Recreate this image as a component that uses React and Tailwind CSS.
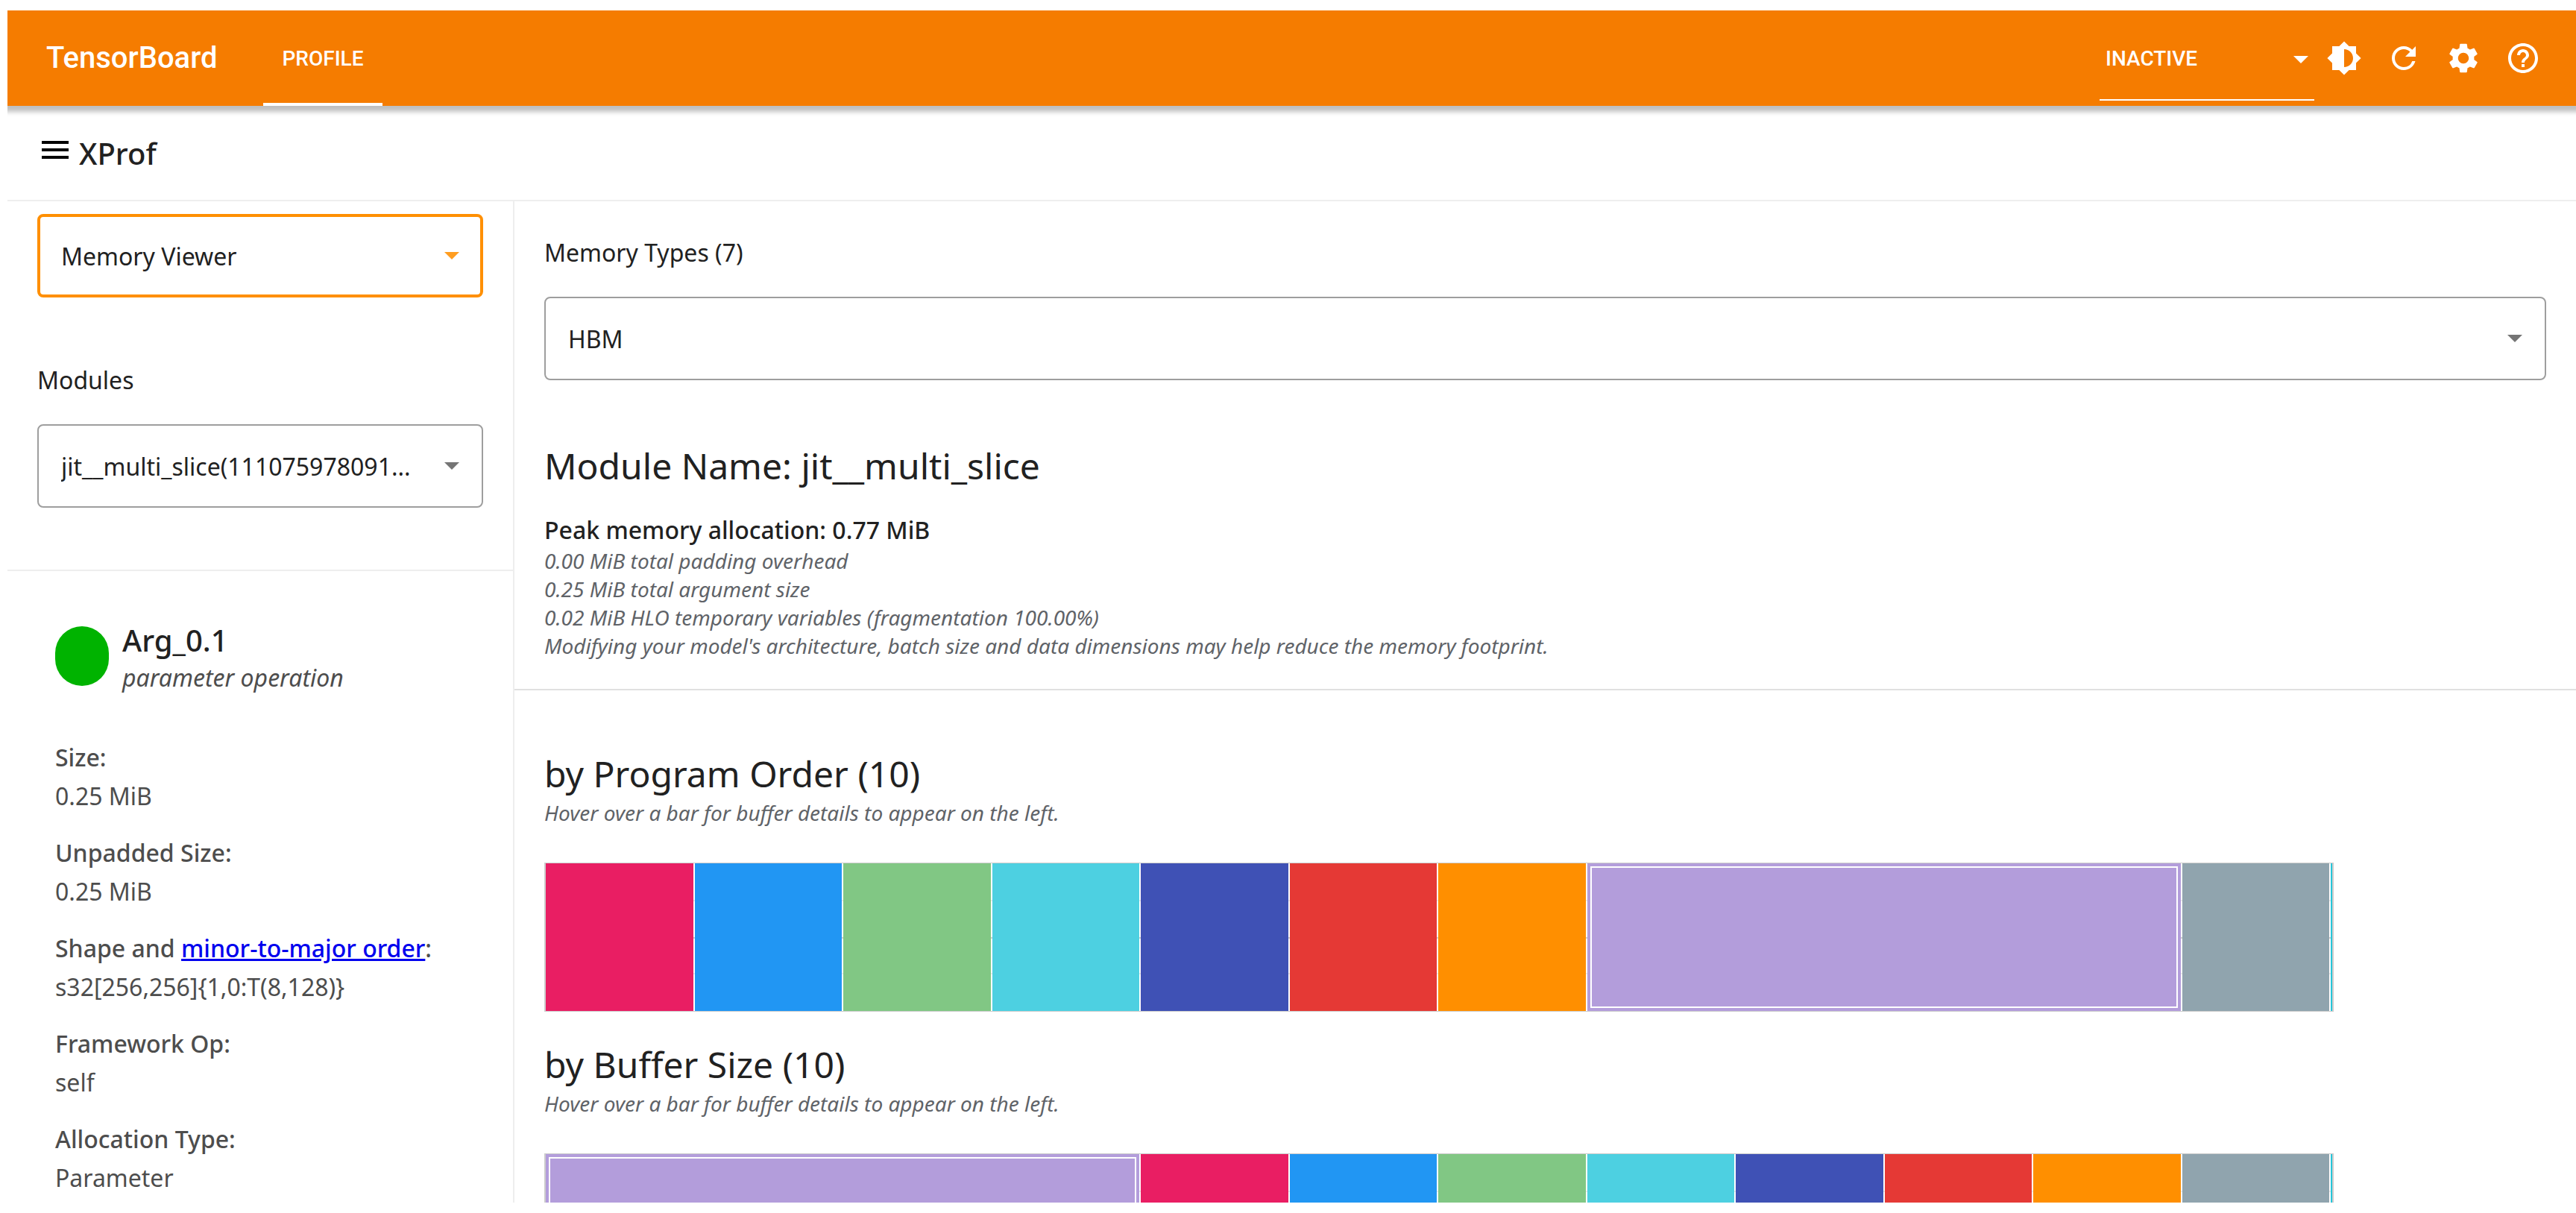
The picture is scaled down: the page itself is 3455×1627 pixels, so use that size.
import React from "react";
import { MdBrightness6, MdRefresh, MdSettings, MdHelpOutline } from "react-icons/md";

const C = {
  pink: "bg-[#e91e63]",
  blue: "bg-[#2196f3]",
  green: "bg-[#81c784]",
  cyan: "bg-[#4dd0e1]",
  indigo: "bg-[#3f51b5]",
  red: "bg-[#e53935]",
  orange: "bg-[#ff8f00]",
  purple: "bg-[#b39ddb]",
  grey: "bg-[#90a4ae]",
};

const programOrder = [C.pink, C.blue, C.green, C.cyan, C.indigo, C.red, C.orange, C.purple, C.grey];
const bufferSize = [C.purple, C.pink, C.blue, C.green, C.cyan, C.indigo, C.red, C.orange, C.grey];

const details = [
  { label: "Size:", value: "0.25 MiB" },
  { label: "Unpadded Size:", value: "0.25 MiB" },
  {
    label: (
      <>
        Shape and{" "}
        <a href="#layout" className="text-[#0000ee] underline">
          minor-to-major order
        </a>
        :
      </>
    ),
    value: "s32[256,256]{1,0:T(8,128)}",
  },
  { label: "Framework Op:", value: "self" },
  { label: "Allocation Type:", value: "Parameter" },
];

function Caret({ className }) {
  return (
    <svg viewBox="0 0 20 10" className={`pointer-events-none absolute h-[10px] w-5 ${className}`} aria-hidden="true">
      <path d="M0 0h20L10 10z" fill="currentColor" />
    </svg>
  );
}

function OutlinedSelect({ id, label, value, focused }) {
  return (
    <div className="relative flex items-center">
      <select
        id={id}
        aria-label={label}
        className={`h-28 w-full appearance-none rounded-lg bg-transparent pt-[2px] pr-[66px] text-[32px] text-[#212121] outline-none ${
          focused ? "border-4 border-[#ff8f00] pl-7" : "border-2 border-[#9e9e9e] pl-[30px]"
        }`}
      >
        <option>{value}</option>
      </select>
      <Caret className={focused ? "right-8 text-[#ff9d20]" : "right-8 text-[#757575]"} />
    </div>
  );
}

function IconButton({ label, icon: Icon }) {
  return (
    <button type="button" aria-label={label} className="flex size-20 items-center justify-center">
      <Icon className="size-12" />
    </button>
  );
}

function BufferChart({ title, bars }) {
  return (
    <section>
      <h2 className="text-[48px] leading-[64px]">{title}</h2>
      <p className="text-[28px] leading-[40px] text-[#5f6368] italic">
        Hover over a bar for buffer details to appear on the left.
      </p>
      <div className="mt-[47px] flex h-[200px] w-full max-w-[2400px] gap-[2px] border-x-2 border-y border-[#cccccc] bg-[linear-gradient(to_bottom,transparent_49px,#ebebeb_49px,#ebebeb_51px,transparent_51px,transparent_99px,#cccccc_99px,#cccccc_101px,transparent_101px,transparent_147px,#ebebeb_147px,#ebebeb_149px,transparent_149px)]">
        {bars.map((color, i) =>
          color === C.purple ? (
            <div key={i} className={`grow-4 basis-1.5 ${color}`}>
              <div className="h-full p-1">
                <div className="h-full border-2 border-white" />
              </div>
            </div>
          ) : (
            <div key={i} className={`grow basis-0 ${color}`} />
          ),
        )}
        <div className="w-[2px] bg-[#26c6da]" />
      </div>
    </section>
  );
}

export default function App() {
  return (
    <div className="flex h-screen flex-col overflow-hidden bg-white pt-[14px] pb-[14px] pl-[10px] font-['Noto_Sans',sans-serif] text-[#212121]">
      <header className="relative z-10 flex h-32 shrink-0 items-center bg-[#f57c00] pr-[31px] pl-[52px] font-[Roboto,sans-serif] font-medium text-white shadow-[0_2px_6px_6px_rgba(0,0,0,0.25)] [clip-path:inset(0_0_-20px_0)]">
        <div className="w-[291px] shrink-0 text-[40px]">TensorBoard</div>
        <nav className="h-full">
          <a href="#profile" className="flex h-full w-40 items-center justify-center border-b-4 border-white pt-[6px] text-[28px]">
            PROFILE
          </a>
        </nav>
        <div className="relative ml-auto flex h-[121px] w-72 items-center self-start">
          <select
            aria-label="Inactive dashboards"
            className="h-full w-full appearance-none border-b-2 border-white bg-transparent pt-[10px] pl-2 text-[28px] outline-none"
          >
            <option>INACTIVE</option>
          </select>
          <Caret className="right-2 bottom-[50px]" />
        </div>
        <IconButton label="Toggle theme" icon={MdBrightness6} />
        <IconButton label="Reload" icon={MdRefresh} />
        <IconButton label="Settings" icon={MdSettings} />
        <IconButton label="Help" icon={MdHelpOutline} />
      </header>

      <div className="flex h-32 shrink-0 items-center gap-2 border-b-2 border-[#eeeeee] pl-10">
        <button type="button" aria-label="Toggle menu" className="mb-2">
          <svg viewBox="0 0 24 24" className="size-12" fill="black" aria-hidden="true">
            <path d="M3 18h18v-2H3v2zm0-5h18v-2H3v2zm0-7v2h18V6H3z" />
          </svg>
        </button>
        <h1 className="pt-[2px] text-[40px] font-medium">XProf</h1>
      </div>

      <div className="flex min-h-0 grow">
        <aside className="w-[680px] shrink-0 overflow-hidden border-r-2 border-[#eeeeee]">
          <div className="border-b-2 border-[#eeeeee] px-10 pt-[17px] pb-[83px]">
            <OutlinedSelect id="tool" label="Tool" value="Memory Viewer" focused />
            <label htmlFor="module" className="mt-[91px] mb-[39px] block text-[32px] leading-[40px]">
              Modules
            </label>
            <OutlinedSelect id="module" value="jit__multi_slice(111075978091..." />
          </div>
          <div className="px-16 pt-[69px]">
            <div className="flex gap-[18px]">
              <div className="mt-[5px] h-20 w-[72px] rounded-[36px] bg-[#00b300]" />
              <div>
                <h2 className="text-[40px] leading-[48px] font-medium">Arg_0.1</h2>
                <p className="mt-1.5 text-[32px] leading-[40px] text-[#4d4d4d] italic">parameter operation</p>
              </div>
            </div>
            <dl className="mt-[61px] flex flex-col gap-6 text-[32px] leading-[52px] text-[#4d4d4d]">
              {details.map((d, i) => (
                <div key={i}>
                  <dt className="font-medium whitespace-nowrap">{d.label}</dt>
                  <dd>{d.value}</dd>
                </div>
              ))}
            </dl>
          </div>
        </aside>

        <main className="min-w-0 grow overflow-hidden">
          <div className="border-b-2 border-[#e0e0e0] px-10 pt-[49px] pb-[39px]">
            <label htmlFor="memory-type" className="mb-[39px] block text-[32px] leading-[40px]">
              Memory Types (7)
            </label>
            <OutlinedSelect id="memory-type" value="HBM" />
            <h2 className="mt-[83px] text-[48px] leading-[64px]">Module Name: jit__multi_slice</h2>
            <p className="mt-[34px] text-[32px] leading-[40px] font-medium">Peak memory allocation: 0.77 MiB</p>
            <div className="mt-[2px] text-[28px] leading-[38px] text-[#5f6368] italic">
              <p>0.00 MiB total padding overhead</p>
              <p>0.25 MiB total argument size</p>
              <p>0.02 MiB HLO temporary variables (fragmentation 100.00%)</p>
              <p>
                Modifying your model's architecture, batch size and data dimensions may help reduce the memory footprint.
              </p>
            </div>
          </div>
          <div className="flex flex-col gap-[39px] px-10 pt-20">
            <BufferChart title="by Program Order (10)" bars={programOrder} />
            <BufferChart title="by Buffer Size (10)" bars={bufferSize} />
          </div>
        </main>
      </div>
    </div>
  );
}
